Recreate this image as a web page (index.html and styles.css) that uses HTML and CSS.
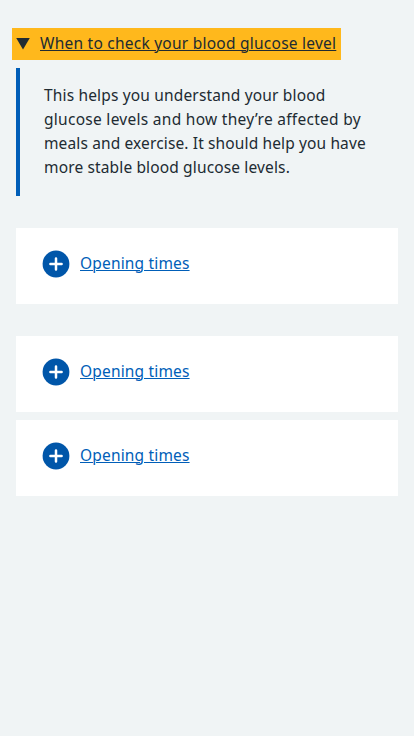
FILE: index.html
```html
<!DOCTYPE html>
<html lang="en">
<head>
<meta charset="utf-8">
<title>Details and expanders</title>
<link rel="stylesheet" href="styles.css">
</head>
<body>
<details class="details" open>
  <summary class="details__summary"><svg class="arrow" viewBox="0 0 14 12" aria-hidden="true"><path d="M.2 0h13.6L7 11.6z"/></svg><span class="title">When to check your blood glucose level</span></summary>
  <div class="details__text"><span class="l1">This helps you understand your blood</span><br><span class="l2">glucose levels and how they’re affected by</span><br><span class="l3">meals and exercise. It should help you have</span><br><span class="l4">more stable blood glucose levels.</span></div>
</details>
<details class="expander">
  <summary class="expander__summary"><svg class="plus" viewBox="0 0 28 28" aria-hidden="true"><circle cx="14" cy="14" r="13.4"/><path d="M14 8.4v11.2M8.4 14h11.2"/></svg><span class="link">Opening times</span></summary>
</details>
<div class="group">
  <details class="expander">
    <summary class="expander__summary"><svg class="plus" viewBox="0 0 28 28" aria-hidden="true"><circle cx="14" cy="14" r="13.4"/><path d="M14 8.4v11.2M8.4 14h11.2"/></svg><span class="link">Opening times</span></summary>
  </details>
  <details class="expander">
    <summary class="expander__summary"><svg class="plus" viewBox="0 0 28 28" aria-hidden="true"><circle cx="14" cy="14" r="13.4"/><path d="M14 8.4v11.2M8.4 14h11.2"/></svg><span class="link">Opening times</span></summary>
  </details>
</div>
</body>
</html>
```
FILE: styles.css
```css
* { box-sizing: border-box; }
body {
  margin: 0;
  padding: 28px 16px;
  display: flex;
  flex-direction: column;
  gap: 32px;
  background: #f0f4f5;
  color: #212b32;
  font: 15.5px/24px "Noto Sans", sans-serif;
  white-space: nowrap;
}
summary { list-style: none; cursor: pointer; }
.details__summary {
  display: flex;
  align-items: center;
  width: 329px;
  height: 32px;
  margin-left: -4px;
  padding-left: 4px;
  background: #ffb81c;
}
.arrow { width: 14px; height: 12px; margin-right: 10px; fill: #212b32; }
.title, .link {
  margin-bottom: 2px;
  text-decoration: underline;
  text-decoration-thickness: 1px;
  text-underline-offset: 1px;
}
.title { letter-spacing: 0.24px; }
.link { letter-spacing: 0.17px; }
.details__text {
  height: 128px;
  margin-top: 8px;
  padding: 15px 0 17px 24px;
  border-left: 4px solid #005eb8;
}
.l1 { letter-spacing: 0.16px; }
.l2 { letter-spacing: 0.28px; }
.l3 { letter-spacing: 0.13px; }
.l4 { letter-spacing: 0.14px; }
.expander { background: #fff; }
.expander__summary {
  display: flex;
  align-items: center;
  gap: 10px;
  height: 76px;
  padding: 0 26px 4px;
  color: #005eb8;
}
.plus { width: 28px; height: 28px; fill: #0056a9; stroke: #fff; stroke-width: 2.5; stroke-linecap: round; }
.plus circle { stroke: none; }
.group { display: flex; flex-direction: column; gap: 8px; }
```
